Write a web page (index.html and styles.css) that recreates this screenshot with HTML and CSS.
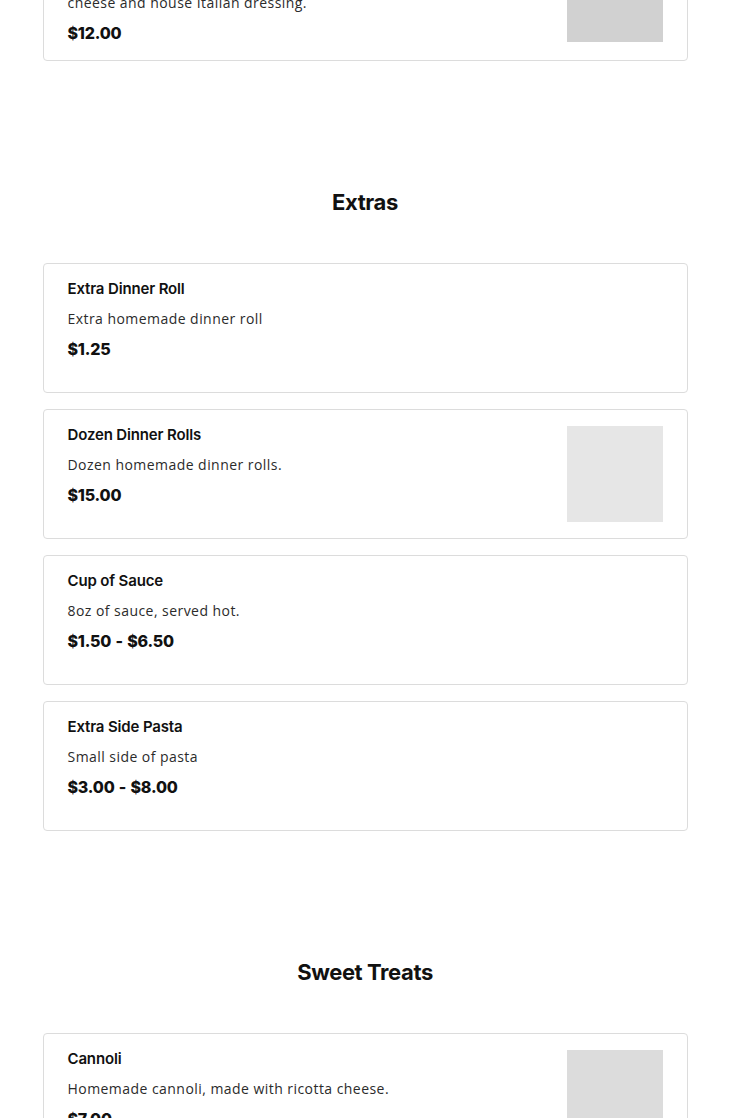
FILE: index.html
```html
<!DOCTYPE html>
<html lang="en">
<head>
<meta charset="utf-8">
<title>Menu</title>
<link rel="stylesheet" href="styles.css">
</head>
<body>
<main class="menu">
  <section class="section first">
    <div class="list">
      <article class="card">
        <div class="info">
          <h3 class="name">House Salad</h3>
          <p class="desc">Crisp romaine, tomatoes, red onions, olives, parmesan<br>cheese and house Italian dressing.</p>
          <p class="price">$12.00</p>
        </div>
        <div class="thumb t1"></div>
      </article>
    </div>
  </section>

  <section class="section">
    <h2 class="heading">Extras</h2>
    <div class="list">
      <article class="card">
        <div class="info">
          <h3 class="name">Extra Dinner Roll</h3>
          <p class="desc">Extra homemade dinner roll</p>
          <p class="price">$1.25</p>
        </div>
      </article>
      <article class="card">
        <div class="info">
          <h3 class="name">Dozen Dinner Rolls</h3>
          <p class="desc">Dozen homemade dinner rolls.</p>
          <p class="price">$15.00</p>
        </div>
        <div class="thumb t2"></div>
      </article>
      <article class="card">
        <div class="info">
          <h3 class="name">Cup of Sauce</h3>
          <p class="desc">8oz of sauce, served hot.</p>
          <p class="price">$1.50 - $6.50</p>
        </div>
      </article>
      <article class="card">
        <div class="info">
          <h3 class="name">Extra Side Pasta</h3>
          <p class="desc">Small side of pasta</p>
          <p class="price">$3.00 - $8.00</p>
        </div>
      </article>
    </div>
  </section>

  <section class="section">
    <h2 class="heading">Sweet Treats</h2>
    <div class="list">
      <article class="card">
        <div class="info">
          <h3 class="name">Cannoli</h3>
          <p class="desc">Homemade cannoli, made with ricotta cheese.</p>
          <p class="price">$7.00</p>
        </div>
        <div class="thumb t3"></div>
      </article>
      <article class="card">
        <div class="info">
          <h3 class="name">Tiramisu</h3>
          <p class="desc">Espresso soaked ladyfingers layered with mascarpone.</p>
          <p class="price">$8.00</p>
        </div>
        <div class="thumb t3"></div>
      </article>
    </div>
  </section>
</main>
</body>
</html>
```

FILE: styles.css
```css
* { box-sizing: border-box; }

html, body {
  margin: 0;
  padding: 0;
  background: #fff;
}

body {
  font-family: "Open Sans", "Liberation Sans", sans-serif;
  color: #111;
}

.menu {
  width: 645px;
  margin: -74px auto 0;
  display: flex;
  flex-direction: column;
}

.section {
  display: flex;
  flex-direction: column;
  padding-top: 125px;
}

.section.first {
  padding-top: 0;
}

.heading {
  margin: 0 0 45px;
  font-family: "Inter", "Liberation Sans", sans-serif;
  font-weight: 700;
  font-size: 22px;
  line-height: 32px;
  letter-spacing: -0.4px;
  text-align: center;
  color: #111;
}

.list {
  display: flex;
  flex-direction: column;
  gap: 16px;
}

.card {
  display: flex;
  align-items: center;
  gap: 24px;
  min-height: 130px;
  padding: 16px 24px;
  border: 1px solid #dcdcdc;
  border-radius: 4px;
  background: #fff;
}

.info {
  flex: 1;
  align-self: flex-start;
  display: flex;
  flex-direction: column;
}

.name {
  margin: 0;
  font-family: "Inter", "Liberation Sans", sans-serif;
  font-weight: 600;
  font-size: 15px;
  line-height: 18px;
  letter-spacing: -0.15px;
  color: #111;
}

.desc {
  margin: 10px 0 0;
  font-size: 14px;
  line-height: 21px;
  letter-spacing: 0.45px;
  color: #2b2b2b;
}

.price {
  margin: 10px 0 0;
  font-family: "Inter", "Liberation Sans", sans-serif;
  font-weight: 800;
  font-size: 16px;
  line-height: 21px;
  letter-spacing: -0.2px;
  word-spacing: 1px;
  color: #111;
}

.thumb {
  flex: none;
  width: 96px;
  height: 96px;
}

.t1 { background: #d1d1d1; }
.t2 { background: #e6e6e6; }
.t3 { background: #dcdcdc; }
```
